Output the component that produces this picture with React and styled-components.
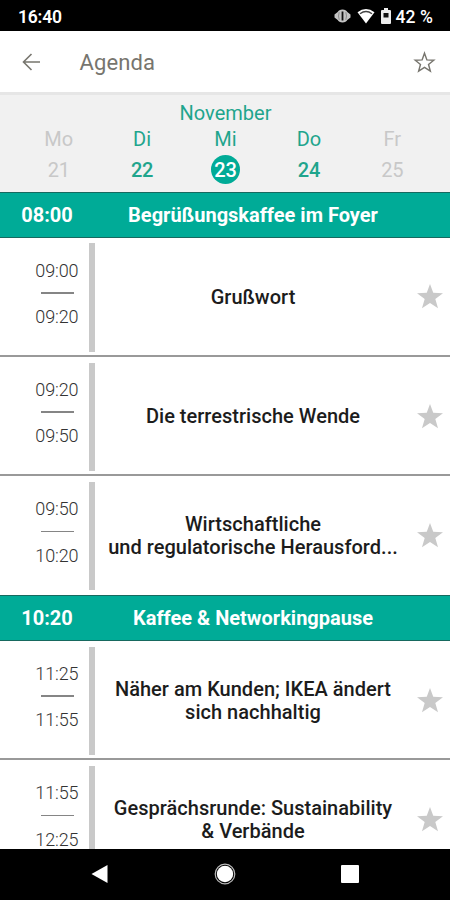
import React from "react";
import styled, { createGlobalStyle } from "styled-components";

const GREEN = "#00ab97";

const GlobalStyle = createGlobalStyle`
  * { box-sizing: border-box; }
  html, body { margin: 0; padding: 0; background: #fff; overflow: hidden; }
`;

const Screen = styled.div`
  width: 450px;
  height: 900px;
  display: flex;
  flex-direction: column;
  overflow: hidden;
  background: #fff;
  font-family: Roboto, "Liberation Sans", sans-serif;
`;

const StatusBar = styled.div`
  flex: none;
  height: 30.5px;
  display: flex;
  align-items: center;
  justify-content: space-between;
  padding: 2px 17px 0 18px;
  background: #000;
  color: #fff;
`;

const Clock = styled.span`
  padding-top: 1px;
  font-size: 17.5px;
  font-weight: 600;
  line-height: 20px;
  letter-spacing: -0.2px;
`;

const StatusIcons = styled.div`
  display: flex;
  align-items: center;
  gap: ${(p) => p.$gap}px;
  svg { display: block; flex: none; }
`;

const BatteryText = styled.span`
  padding-top: 1px;
  font-size: 17.5px;
  font-weight: 500;
  line-height: 20px;
  letter-spacing: 0.1px;
  white-space: nowrap;
`;

const AppBar = styled.header`
  flex: none;
  height: 61.5px;
  display: flex;
  align-items: center;
  padding: 2px 14px 0 22px;
  color: #77756e;
  svg { display: block; flex: none; }
`;

const AppTitle = styled.h1`
  flex: 1;
  margin: 0 0 0 38.5px;
  padding-top: 2px;
  font-size: 22px;
  font-weight: 400;
  line-height: 28px;
  letter-spacing: 0.1px;
`;

const DatePanel = styled.section`
  flex: none;
  height: 99.6px;
  padding: 6.5px 16px 0 17px;
  border-top: 3px solid #e6e6e6;
  background: #f1f1f1;
`;

const Month = styled.div`
  height: 26.5px;
  text-align: center;
  font-size: 20px;
  line-height: 22px;
  color: #1fa58d;
`;

const Week = styled.div`
  display: grid;
  grid-template-columns: repeat(5, 1fr);
`;

const Day = styled.div`
  display: flex;
  flex-direction: column;
  align-items: center;
  font-size: 20px;
  color: ${(p) => (p.$enabled ? "#1fa58d" : "#c8c8c8")};
`;

const DayName = styled.span`
  height: 26.5px;
  line-height: 22px;
`;

const DayNumber = styled.span`
  width: 29px;
  height: 29px;
  border-radius: 50%;
  line-height: 30px;
  text-align: center;
  letter-spacing: -0.2px;
  font-weight: ${(p) => (p.$enabled ? 500 : 400)};
  background: ${(p) => (p.$selected ? GREEN : "transparent")};
  color: ${(p) => (p.$selected ? "#fff" : "inherit")};
`;

const List = styled.main`
  flex: none;
  height: 657.4px;
  overflow: hidden;
`;

const Banner = styled.div`
  height: 46px;
  display: flex;
  align-items: center;
  padding-top: 1px;
  border-top: 1px solid #17695f;
  border-bottom: 1px solid #17695f;
  background: ${GREEN};
  color: #fff;
  font-size: 20px;
  font-weight: 700;
  line-height: 24px;
`;

const BannerTime = styled.span`
  flex: none;
  width: 94px;
  text-align: center;
`;

const BannerTitle = styled.span`
  flex: none;
  width: 318px;
  text-align: center;
  white-space: nowrap;
`;

const SessionRow = styled.div`
  height: 119.4px;
  display: flex;
  border-bottom: 2px solid #999;
  &:has(+ ${Banner}) { border-bottom-color: transparent; height: 118.5px; }
`;

const Times = styled.div`
  flex: none;
  width: 89px;
  padding: 21px 10.5px 0 0;
  display: flex;
  flex-direction: column;
  align-items: flex-end;
  font-size: 18px;
  font-weight: 300;
  line-height: 24px;
  letter-spacing: -0.1px;
  color: #333;
`;

const TimeRule = styled.span`
  width: 33px;
  height: 1.5px;
  margin: 9.5px 4.5px 11.5px 0;
  background: #858585;
`;

const Divider = styled.div`
  flex: none;
  width: 6px;
  margin: 5.7px 0 3.3px;
  background: #c9c9c9;
`;

const SessionTitle = styled.div`
  flex: none;
  width: 316px;
  padding-top: 3px;
  display: flex;
  align-items: center;
  justify-content: center;
  text-align: center;
  white-space: pre-line;
  font-size: 20px;
  font-weight: 500;
  line-height: 23.5px;
  letter-spacing: 0.02px;
  color: #1c1c1c;
`;

const Favorite = styled.div`
  flex: none;
  width: 37px;
  display: flex;
  align-items: center;
  justify-content: center;
  color: #c9c9c9;
  svg { display: block; }
`;

const NavBar = styled.nav`
  flex: none;
  height: 51px;
  display: flex;
  justify-content: space-between;
  align-items: center;
  padding: 0 91px;
  background: #000;
  color: #fff;
  svg { display: block; }
`;

const days = [
  { name: "Mo", number: 21 },
  { name: "Di", number: 22, enabled: true },
  { name: "Mi", number: 23, enabled: true, selected: true },
  { name: "Do", number: 24, enabled: true },
  { name: "Fr", number: 25 },
];

const agenda = [
  { banner: true, start: "08:00", title: "Begrüßungskaffee im Foyer" },
  { start: "09:00", end: "09:20", title: "Grußwort" },
  { start: "09:20", end: "09:50", title: "Die terrestrische Wende" },
  { start: "09:50", end: "10:20", title: "Wirtschaftliche\nund regulatorische Herausford..." },
  { banner: true, start: "10:20", title: "Kaffee & Networkingpause" },
  { start: "11:25", end: "11:55", title: "Näher am Kunden; IKEA ändert\nsich nachhaltig" },
  { start: "11:55", end: "12:25", title: "Gesprächsrunde: Sustainability\n& Verbände" },
];

const STAR = "M12 1 15 9.1 24 9.4 16.9 14.8 19.4 23.4 12 18.4 4.6 23.4 7.1 14.8 0 9.4 9 9.1Z";

function StatusGlyphs() {
  return (
    <StatusIcons $gap={4}>
      <StatusIcons $gap={6}>
        <svg width="17" height="14" viewBox="0 0 17 14">
          <path d="M8.5.5C11 .5 12.5 1.6 13.3 2.9L16.5 5.5v3l-3.2 2.6C12.5 12.4 11 13.5 8.5 13.5S4.5 12.4 3.7 11.1L.5 8.5v-3l3.2-2.6C4.5 1.6 6 .5 8.5.5Z" fill="#c4c4c4" />
          <path d="M5.2 3.2Q3.8 7 5.2 10.8M11.8 3.2Q13.2 7 11.8 10.8" fill="none" stroke="#8a8a8a" strokeWidth="1" />
          <path d="M8.5 2.5v9" stroke="#111" strokeWidth="1.8" />
        </svg>
        <svg width="18" height="16" viewBox="0 0 18 16">
          <path d="M.5 4.3Q9-2.5 17.5 4.3L9 15.5Z" fill="#fff" />
          <path d="M3 5.8Q9 1.2 15 5.8" fill="none" stroke="#444" strokeWidth="1.4" />
        </svg>
        <svg width="10" height="16" viewBox="0 0 10 16">
          <path d="M3 0h4v2h2q1 0 1 1v12q0 1-1 1H1q-1 0-1-1V3q0-1 1-1h2Z" fill="#eee" />
          <path d="M2.5 5h5v4.5h-5Z" fill="#111" />
        </svg>
      </StatusIcons>
      <BatteryText>42 %</BatteryText>
    </StatusIcons>
  );
}

function Session({ item }) {
  return (
    <SessionRow>
      <Times>
        <span>{item.start}</span>
        <TimeRule />
        <span>{item.end}</span>
      </Times>
      <Divider />
      <SessionTitle>{item.title}</SessionTitle>
      <Favorite>
        <svg width="26" height="26" viewBox="0 0 24 24"><path d={STAR} fill="currentColor" /></svg>
      </Favorite>
    </SessionRow>
  );
}

export default function App() {
  return (
    <Screen>
      <GlobalStyle />
      <StatusBar>
        <Clock>16:40</Clock>
        <StatusGlyphs />
      </StatusBar>
      <AppBar>
        <svg width="19" height="18" viewBox="0 0 19 18" fill="none" stroke="currentColor" strokeWidth="1.6">
          <path d="M18 9H2M9.5 1 1.5 9l8 8" />
        </svg>
        <AppTitle>Agenda</AppTitle>
        <svg width="23" height="23" viewBox="0 0 24 24" fill="none" stroke="currentColor" strokeWidth="1.5">
          <path d="M12 2.3 14.5 9.3 21.7 9.6 16.2 14.1 18.1 21 12 17.1 5.9 21 7.8 14.1 2.3 9.6 9.5 9.3Z" />
        </svg>
      </AppBar>
      <DatePanel>
        <Month>November</Month>
        <Week>
          {days.map((d) => (
            <Day key={d.number} $enabled={d.enabled}>
              <DayName>{d.name}</DayName>
              <DayNumber $enabled={d.enabled} $selected={d.selected}>{d.number}</DayNumber>
            </Day>
          ))}
        </Week>
      </DatePanel>
      <List>
        {agenda.map((item) =>
          item.banner ? (
            <Banner key={item.start}>
              <BannerTime>{item.start}</BannerTime>
              <BannerTitle>{item.title}</BannerTitle>
            </Banner>
          ) : (
            <Session key={item.start} item={item} />
          )
        )}
      </List>
      <NavBar>
        <svg width="17" height="20" viewBox="0 0 17 20"><path d="M16.5 1v18L.5 10Z" fill="currentColor" /></svg>
        <svg width="22" height="22" viewBox="0 0 22 22">
          <circle cx="11" cy="11" r="9.8" fill="none" stroke="#bbb" strokeWidth="1.2" />
          <circle cx="11" cy="11" r="8.2" fill="currentColor" />
        </svg>
        <svg width="18" height="18" viewBox="0 0 18 18"><rect width="18" height="18" rx="1" fill="currentColor" /></svg>
      </NavBar>
    </Screen>
  );
}
